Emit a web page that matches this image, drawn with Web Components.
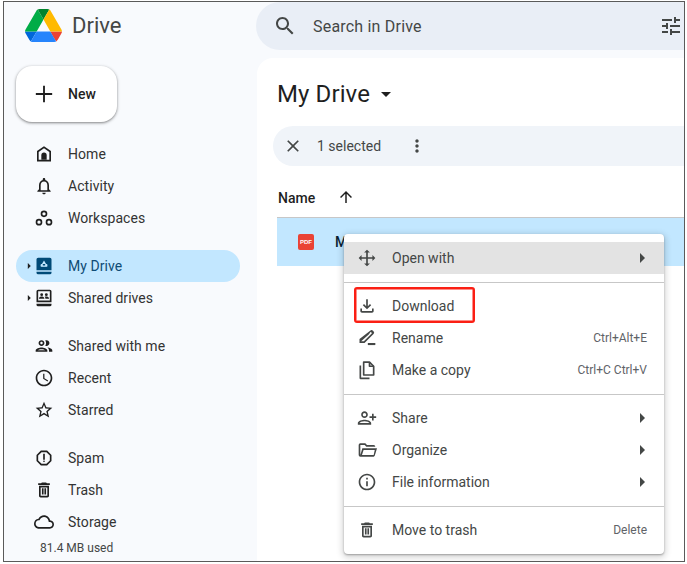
<!DOCTYPE html>
<html>
<head>
<meta charset="utf-8">
<title>Drive</title>
<style>
html, body { margin: 0; background: #fff; }
body { font-family: Roboto, "Liberation Sans", sans-serif; color: #1f1f1f; }
</style>
</head>
<body>
<drive-window>
  <drive-header slot="header"></drive-header>
  <drive-sidebar slot="sidebar">
    <new-button>New</new-button>
    <nav-group>
      <nav-item icon="home">Home</nav-item>
      <nav-item icon="bell">Activity</nav-item>
      <nav-item icon="workspaces">Workspaces</nav-item>
    </nav-group>
    <nav-group>
      <nav-item icon="mydrive" caret active>My Drive</nav-item>
      <nav-item icon="shareddrives" caret>Shared drives</nav-item>
    </nav-group>
    <nav-group>
      <nav-item icon="people">Shared with me</nav-item>
      <nav-item icon="clock">Recent</nav-item>
      <nav-item icon="star">Starred</nav-item>
    </nav-group>
    <nav-group>
      <nav-item icon="spam">Spam</nav-item>
      <nav-item icon="trash">Trash</nav-item>
      <nav-item icon="cloud">Storage</nav-item>
    </nav-group>
    <storage-used>81.4 MB used</storage-used>
  </drive-sidebar>
  <drive-main slot="main"></drive-main>
  <context-menu slot="menu">
    <menu-section>
      <menu-item icon="openwith" submenu hover>Open with</menu-item>
    </menu-section>
    <menu-section divided>
      <menu-item icon="download" marked>Download</menu-item>
      <menu-item icon="rename" shortcut="Ctrl+Alt+E">Rename</menu-item>
      <menu-item icon="copy" shortcut="Ctrl+C Ctrl+V">Make a copy</menu-item>
    </menu-section>
    <menu-section divided>
      <menu-item icon="share" submenu>Share</menu-item>
      <menu-item icon="folder" submenu>Organize</menu-item>
      <menu-item icon="info" submenu>File information</menu-item>
    </menu-section>
    <menu-section divided>
      <menu-item icon="trash" shortcut="Delete">Move to trash</menu-item>
    </menu-section>
  </context-menu>
</drive-window>

<script>
const ICONS = {
  search: '<path d="M15.5 14h-.79l-.28-.27C15.41 12.59 16 11.11 16 9.5 16 5.91 13.09 3 9.5 3S3 5.91 3 9.5 5.91 16 9.5 16c1.61 0 3.09-.59 4.23-1.57l.27.28v.79l5 4.99L20.49 19l-4.99-5zm-6 0C7.01 14 5 11.99 5 9.5S7.01 5 9.5 5 14 7.01 14 9.5 11.99 14 9.5 14z"/>',
  tune: '<path d="M3 17v2h6v-2H3zM3 5v2h10V5H3zm10 16v-2h8v-2h-8v-2h-2v6h2zM7 9v2H3v2h4v2h2V9H7zm14 4v-2H11v2h10zm-6-4h2V7h4V5h-4V3h-2v6z"/>',
  close: '<path d="M19 6.41L17.59 5 12 10.59 6.41 5 5 6.41 10.59 12 5 17.59 6.41 19 12 13.41 17.59 19 19 17.59 13.41 12z"/>',
  more: '<path d="M12 8c1.1 0 2-.9 2-2s-.9-2-2-2-2 .9-2 2 .9 2 2 2zm0 2c-1.1 0-2 .9-2 2s.9 2 2 2 2-.9 2-2-.9-2-2-2zm0 6c-1.1 0-2 .9-2 2s.9 2 2 2 2-.9 2-2-.9-2-2-2z"/>',
  up: '<path d="M4 12l1.41 1.41L11 7.83V20h2V7.83l5.58 5.59L20 12l-8-8-8 8z"/>',
  add: '<path d="M19 12.8h-6.2V19h-1.6v-6.2H5v-1.6h6.2V5h1.6v6.2H19z"/>',
  caretdown: '<path d="M7 10l5 5 5-5z"/>',
  caretright: '<path d="M10 17l5-5-5-5v10z"/>',
  home: '<path d="M12 2.8L3.6 8.4V21h16.8V8.4L12 2.8zM18.4 19H5.6V9.5L12 5.2l6.4 4.3V19z"/><path d="M8.8 13.5a3.2 3.2 0 0 1 6.4 0V19H8.8z"/>',
  bell: '<path d="M12 22c1.1 0 2-.9 2-2h-4c0 1.1.9 2 2 2zm6-6v-5c0-3.07-1.63-5.64-4.5-6.32V4c0-.83-.67-1.5-1.5-1.5s-1.5.67-1.5 1.5v.68C7.64 5.36 6 7.92 6 11v5l-2 2v1h16v-1l-2-2zm-2 1H8v-6c0-2.48 1.51-4.5 4-4.5s4 2.02 4 4.5v6z"/>',
  workspaces: '<g fill="none" stroke="currentColor" stroke-width="2"><circle cx="12" cy="7" r="3"/><circle cx="6" cy="17" r="3"/><circle cx="18" cy="17" r="3"/></g>',
  mydrive: '<path d="M5 2h14a2 2 0 0 1 2 2v13H3V4a2 2 0 0 1 2-2zM3 19h18v1a2 2 0 0 1-2 2H5a2 2 0 0 1-2-2z"/><path fill="#c2e7ff" d="M12 5.5l4.2 6.7H7.8z"/><rect x="8" y="9.5" width="8" height="3.5" rx="1" fill="#c2e7ff"/><rect x="10.6" y="9.6" width="2.8" height="1.8"/>',
  shareddrives: '<path d="M5 2h14a2 2 0 0 1 2 2v13H3V4a2 2 0 0 1 2-2zm0 2v11h14V4zM3 19h18v1a2 2 0 0 1-2 2H5a2 2 0 0 1-2-2z"/><circle cx="9.2" cy="8" r="1.7"/><circle cx="14.8" cy="8" r="1.7"/><path d="M6 13v-.8c0-1.1 2-1.9 3.2-1.9s3.2.8 3.2 1.9v.8zm7.6 0v-.8c0-.7-.3-1.3-.8-1.7.6-.1 1.4-.2 2-.2 1.2 0 3.2.8 3.2 1.9v.8z"/>',
  people: '<path d="M9 13.75c-2.34 0-7 1.17-7 3.5V19h14v-1.75c0-2.33-4.66-3.5-7-3.5zM4.34 17c.84-.58 2.87-1.25 4.66-1.25s3.82.67 4.66 1.25H4.34zM9 12c1.93 0 3.5-1.57 3.5-3.5S10.93 5 9 5 5.5 6.57 5.5 8.5 7.07 12 9 12zm0-5c.83 0 1.5.67 1.5 1.5S9.83 10 9 10s-1.5-.67-1.5-1.5S8.17 7 9 7zm7.04 6.81c1.16.84 1.96 1.96 1.96 3.44V19h4v-1.75c0-2.02-3.5-3.17-5.96-3.44zM15 12c1.93 0 3.5-1.57 3.5-3.5S16.93 5 15 5c-.54 0-1.04.13-1.5.35.63.89 1 1.98 1 3.15s-.37 2.26-1 3.15c.46.22.96.35 1.5.35z"/>',
  clock: '<path d="M11.99 2C6.47 2 2 6.48 2 12s4.47 10 9.99 10C17.52 22 22 17.52 22 12S17.52 2 11.99 2zM12 20c-4.42 0-8-3.58-8-8s3.58-8 8-8 8 3.58 8 8-3.58 8-8 8zm.5-13H11v6l5.25 3.15.75-1.23-4.5-2.67z"/>',
  star: '<path d="M22 9.24l-7.19-.62L12 2 9.19 8.63 2 9.24l5.46 4.73L5.82 21 12 17.27 18.18 21l-1.63-7.03L22 9.24zM12 15.4l-3.76 2.27 1-4.28-3.32-2.88 4.38-.38L12 6.1l1.71 4.04 4.38.38-3.32 2.88 1 4.28L12 15.4z"/>',
  spam: '<path d="M15.73 3H8.27L3 8.27v7.46L8.27 21h7.46L21 15.73V8.27L15.73 3zM19 14.9L14.9 19H9.1L5 14.9V9.1L9.1 5h5.8L19 9.1v5.8z"/><circle cx="12" cy="16" r="1"/><path d="M11 7h2v7h-2z"/>',
  trash: '<path d="M16 9v10H8V9h8m-1.5-6h-5l-1 1H5v2h14V4h-3.5l-1-1zM18 7H6v12c0 1.1.9 2 2 2h8c1.1 0 2-.9 2-2V7z"/><path d="M9.5 10h2v7.5h-2zM12.5 10h2v7.5h-2z"/>',
  cloud: '<path d="M19.35 10.04C18.67 6.59 15.64 4 12 4 9.11 4 6.6 5.64 5.35 8.04 2.34 8.36 0 10.91 0 14c0 3.31 2.69 6 6 6h13c2.76 0 5-2.24 5-5 0-2.64-2.05-4.78-4.65-4.96zM19 18H6c-2.21 0-4-1.79-4-4 0-2.05 1.53-3.76 3.56-3.97l1.07-.11.5-.95C8.08 7.14 9.94 6 12 6c2.62 0 4.88 1.86 5.39 4.43l.3 1.5 1.53.11c1.56.1 2.78 1.41 2.78 2.96 0 1.65-1.35 3-3 3z"/>',
  openwith: '<path d="M12 2l3.5 3.5H13V11h5.5V8.5L22 12l-3.5 3.5V13H13v5.5h2.5L12 22l-3.5-3.5H11V13H5.5v2.5L2 12l3.5-3.5V11H11V5.5H8.5z"/>',
  download: '<path d="M18 15v3H6v-3H4v3c0 1.1.9 2 2 2h12c1.1 0 2-.9 2-2v-3h-2zm-1-4l-1.41-1.41L13 12.17V4h-2v8.17L8.41 9.59 7 11l5 5 5-5z"/>',
  rename: '<path d="M15.8 3.2a2.4 2.4 0 0 1 3.4 0l.6.6a2.4 2.4 0 0 1 0 3.4L9 18H3v-4.8zM14.4 7.4L5 16h3.2l9.4-9.4a.7.7 0 0 0 0-1l-.6-.6a.7.7 0 0 0-1 0z"/><path d="M13 18h9v2.5h-9z"/>',
  copy: '<g fill="none" stroke="currentColor" stroke-width="2" stroke-linejoin="round"><path d="M8 2.5h7l5 5V18H8z"/><path d="M15 2.5v5h5"/><path d="M4 6.5V22h11"/></g>',
  share: '<g transform="translate(24 0) scale(-1 1)"><path d="M15 12c2.21 0 4-1.79 4-4s-1.79-4-4-4-4 1.79-4 4 1.79 4 4 4zm0-6c1.1 0 2 .9 2 2s-.9 2-2 2-2-.9-2-2 .9-2 2-2zm0 8c-2.67 0-8 1.34-8 4v2h16v-2c0-2.66-5.33-4-8-4zm-6 4c.22-.72 3.31-2 6-2 2.7 0 5.8 1.29 6 2H9zm-3-3v-3h3v-2H6V7H4v3H1v2h3v3h2z"/></g>',
  folder: '<path d="M4 4h6l2 2h8a2 2 0 0 1 2 2H11.2L9.2 6H4v12l2.4-8H24l-2.7 9a1.5 1.5 0 0 1-1.4 1H4a2 2 0 0 1-2-2V6a2 2 0 0 1 2-2zm3.9 8L6 18h14l1.3-6z"/>',
  info: '<path d="M11 7h2v2h-2zm0 4h2v6h-2zm1-9C6.48 2 2 6.48 2 12s4.48 10 10 10 10-4.48 10-10S17.52 2 12 2zm0 18c-4.41 0-8-3.59-8-8s3.59-8 8-8 8 3.59 8 8-3.59 8-8 8z"/>',
};

// small helper so every element below only has to give its html
class ShadowElement extends HTMLElement {
  constructor() {
    super();
    this.attachShadow({ mode: 'open' });
  }
  connectedCallback() {
    this.shadowRoot.innerHTML = this.render();
  }
}

class DriveIcon extends ShadowElement {
  render() {
    const size = this.getAttribute('size') || 20;
    return `<style>
      :host { display: inline-flex; flex: none; width: ${size}px; height: ${size}px; }
      svg { display: block; width: 100%; height: 100%; fill: currentColor; }
    </style>
    <svg viewBox="0 0 24 24">${ICONS[this.getAttribute('name')] || ''}</svg>`;
  }
}

class DriveWindow extends ShadowElement {
  render() {
    return `<style>
      :host {
        display: grid; position: relative; box-sizing: border-box; overflow: hidden;
        margin: 1px 0 0 3px; width: 682px; height: 561px;
        border: 1px solid #5a5a5a; background: #f8fafd;
        grid-template-columns: 253px 1fr; grid-template-rows: 56px 1fr;
      }
      ::slotted([slot=header]) { grid-column: 1 / 3; }
      ::slotted([slot=menu]) { position: absolute; left: 340px; top: 232px; }
    </style>
    <slot name="header"></slot><slot name="sidebar"></slot><slot name="main"></slot><slot name="menu"></slot>`;
  }
}

class DriveHeader extends ShadowElement {
  render() {
    return `<style>
      :host { display: flex; height: 56px; color: #444746; }
      .brand { display: flex; align-items: flex-start; width: 252px; box-sizing: border-box; padding: 7px 0 0 21px; }
      .brand svg { width: 37px; height: 33px; }
      .brand span { font: 400 22px/36px Roboto, sans-serif; margin-left: 10px; margin-top: -1px; }
      .search {
        flex: 1; display: flex; align-items: center; height: 48px; box-sizing: border-box; overflow: hidden;
        background: #e9eef6; border-radius: 24px 0 0 24px; padding-left: 17px;
      }
      .search span { font-size: 16px; letter-spacing: .2px; margin-left: 16px; flex: 1; }
      .search drive-icon:last-child { margin-right: 1px; }
    </style>
    <div class="brand">
      <svg viewBox="0 0 87.3 78">
        <path d="m6.6 66.85 3.85 6.65c.8 1.4 1.95 2.5 3.3 3.3l13.75-23.8h-27.5c0 1.55.4 3.1 1.2 4.5z" fill="#0066da"/>
        <path d="m43.65 25-13.75-23.8c-1.35.8-2.5 1.9-3.3 3.3l-25.4 44a9.06 9.06 0 0 0 -1.2 4.5h27.5z" fill="#00ac47"/>
        <path d="m73.55 76.8c1.35-.8 2.5-1.9 3.3-3.3l1.6-2.75 7.65-13.25c.8-1.4 1.2-2.95 1.2-4.5h-27.502l5.852 11.5z" fill="#ea4335"/>
        <path d="m43.65 25 13.75-23.8c-1.35-.8-2.9-1.2-4.5-1.2h-18.5c-1.6 0-3.15.45-4.5 1.2z" fill="#00832d"/>
        <path d="m59.8 53h-32.3l-13.75 23.8c1.35.8 2.9 1.2 4.5 1.2h50.8c1.6 0 3.15-.45 4.5-1.2z" fill="#2684fc"/>
        <path d="m73.4 26.5-12.7-22c-.8-1.4-1.95-2.5-3.3-3.3l-13.75 23.8 16.15 28h27.45c0-1.55-.4-3.1-1.2-4.5z" fill="#ffba00"/>
      </svg>
      <span>Drive</span>
    </div>
    <div class="search">
      <drive-icon name="search" size="24"></drive-icon>
      <span>Search in Drive</span>
      <drive-icon name="tune" size="24"></drive-icon>
    </div>`;
  }
}

class DriveSidebar extends ShadowElement {
  render() {
    return `<style>
      :host { display: flex; flex-direction: column; gap: 16px; padding: 8px 0 0 12px; min-width: 0; }
    </style><slot></slot>`;
  }
}

class NewButton extends ShadowElement {
  render() {
    return `<style>
      :host {
        display: flex; align-items: center; box-sizing: border-box; width: 101px; height: 56px;
        background: #fff; border-radius: 16px; padding-left: 14px; color: #1f1f1f;
        box-shadow: 0 1px 2px rgba(0,0,0,.3), 0 1px 3px 1px rgba(0,0,0,.15);
        font-size: 14px; font-weight: 500;
      }
      span { margin-left: 10px; }
    </style><drive-icon name="add" size="28"></drive-icon><span><slot></slot></span>`;
  }
}

class NavGroup extends ShadowElement {
  render() {
    return `<style>:host { display: block; }</style><slot></slot>`;
  }
}

class NavItem extends ShadowElement {
  render() {
    const active = this.hasAttribute('active');
    return `<style>
      :host {
        display: flex; align-items: center; box-sizing: border-box; width: 224px; height: 32px;
        padding-left: 7px; border-radius: 16px; font-size: 14px; letter-spacing: .05px;
        color: ${active ? '#0f4c75' : '#333'}; background: ${active ? '#c2e7ff' : 'transparent'};
      }
      .caret { display: flex; width: 11px; justify-content: center; color: #1f1f1f; }
      .glyph { color: ${active ? '#004a77' : '#1f1f1f'}; display: flex; margin-right: 14px; }
    </style>
    <span class="caret">${this.hasAttribute('caret') ? '<drive-icon name="caretright" size="14"></drive-icon>' : ''}</span>
    <span class="glyph"><drive-icon name="${this.getAttribute('icon')}"></drive-icon></span>
    <slot></slot>`;
  }
}

class StorageUsed extends ShadowElement {
  render() {
    return `<style>
      :host { display: block; margin: -14px 0 0 24px; font-size: 12px; line-height: 16px; color: #444746; }
    </style><slot></slot>`;
  }
}

class DriveMain extends ShadowElement {
  render() {
    return `<style>
      :host { display: block; background: #fff; border-radius: 16px 0 0 0; overflow: hidden; }
      h1 { margin: 0; display: flex; align-items: center; height: 68px; padding: 4px 0 0 20px; font: 400 24px Roboto, sans-serif; letter-spacing: .1px; color: #1f1f1f; box-sizing: border-box; }
      h1 drive-icon { margin-left: 4px; color: #1f1f1f; }
      .bar {
        display: flex; align-items: center; height: 40px; margin-left: 16px; padding-left: 10px;
        background: #f0f4f9; border-radius: 20px 0 0 20px; font-size: 14px; color: #444746;
      }
      .bar span { margin-left: 14px; margin-right: 26px; }
      .head { display: flex; align-items: center; box-sizing: border-box; height: 51px; padding: 12px 0 0 21px; font-size: 14px; font-weight: 500; color: #1f1f1f; }
      .head drive-icon { margin-left: 22px; margin-top: -2px; }
      .row {
        display: flex; align-items: center; height: 48px; margin-left: 20px;
        background: #c2e7ff; border-top: 1px solid #c7c7c7; font-size: 14px; font-weight: 500; color: #0b1f33;
      }
      .pdf {
        display: flex; align-items: center; justify-content: center; width: 16px; height: 16px; margin: 0 21px 0 21px;
        background: #ea4335; border-radius: 2px; color: #fff; font: 700 6px "Liberation Sans", sans-serif;
      }
    </style>
    <h1>My Drive<drive-icon name="caretdown" size="24"></drive-icon></h1>
    <div class="bar">
      <drive-icon name="close"></drive-icon>
      <span>1 selected</span>
      <drive-icon name="more"></drive-icon>
    </div>
    <div class="head">Name<drive-icon name="up" size="18"></drive-icon></div>
    <div class="row"><span class="pdf">PDF</span>My file.pdf</div>`;
  }
}

class ContextMenu extends ShadowElement {
  render() {
    return `<style>
      :host {
        display: block; width: 320px; background: #fff; border-radius: 4px;
        box-shadow: 0 2px 6px 2px rgba(0,0,0,.15), 0 1px 2px rgba(0,0,0,.3);
      }
    </style><slot></slot>`;
  }
}

class MenuSection extends ShadowElement {
  render() {
    const divided = this.hasAttribute('divided');
    return `<style>
      :host { display: block; padding: ${divided ? 7 : 8}px 0 8px; ${divided ? 'border-top: 1px solid #c7c7c7;' : ''} }
    </style><slot></slot>`;
  }
}

class MenuItem extends ShadowElement {
  render() {
    const shortcut = this.getAttribute('shortcut');
    return `<style>
      :host {
        display: flex; align-items: center; position: relative; height: 32px; padding: 0 17px 0 13px;
        font-size: 14px; color: #444746; background: ${this.hasAttribute('hover') ? '#e3e3e3' : 'transparent'};
      }
      .glyph { display: flex; margin-right: 15px; color: #444746; }
      .label { flex: 1; }
      .key { font-size: 12px; color: #5f6368; }
      .arrow { display: flex; margin-right: -7px; color: #444746; }
      .mark { position: absolute; left: 10px; top: -3px; width: 121px; height: 36px; box-sizing: border-box; border: 2px solid #fb1f14; border-radius: 3px; box-shadow: inset 0 0 0 .5px #fb1f14; }
    </style>
    <span class="glyph"><drive-icon name="${this.getAttribute('icon')}"></drive-icon></span>
    <span class="label"><slot></slot></span>
    ${shortcut ? `<span class="key">${shortcut}</span>` : ''}
    ${this.hasAttribute('submenu') ? '<span class="arrow"><drive-icon name="caretright" size="24"></drive-icon></span>' : ''}
    ${this.hasAttribute('marked') ? '<span class="mark"></span>' : ''}`;
  }
}

customElements.define('drive-icon', DriveIcon);
customElements.define('drive-window', DriveWindow);
customElements.define('drive-header', DriveHeader);
customElements.define('drive-sidebar', DriveSidebar);
customElements.define('new-button', NewButton);
customElements.define('nav-group', NavGroup);
customElements.define('nav-item', NavItem);
customElements.define('storage-used', StorageUsed);
customElements.define('drive-main', DriveMain);
customElements.define('context-menu', ContextMenu);
customElements.define('menu-section', MenuSection);
customElements.define('menu-item', MenuItem);
</script>
</body>
</html>
